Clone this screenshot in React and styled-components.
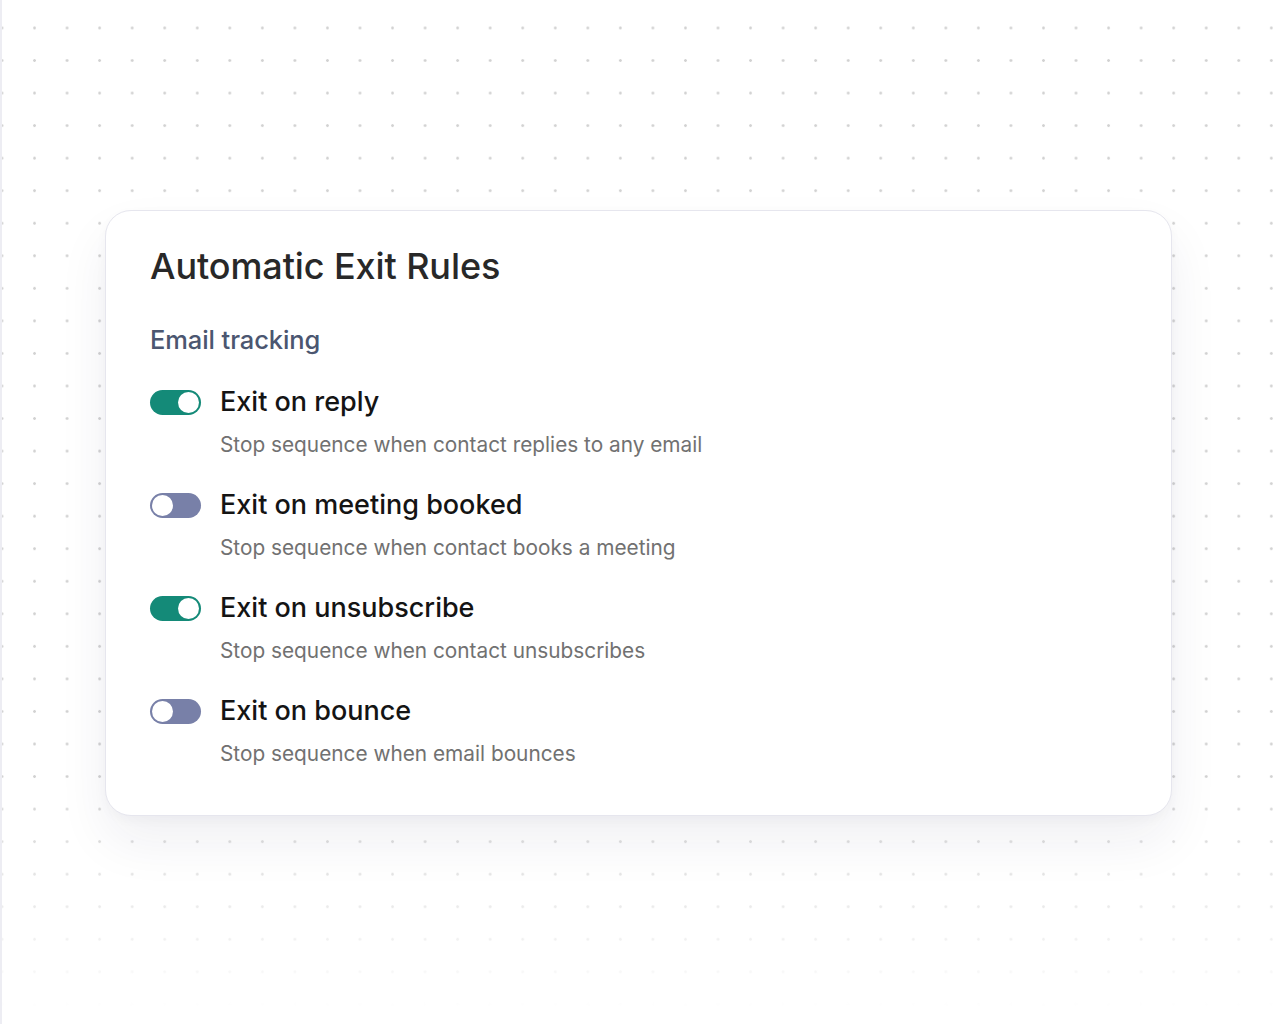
import React, { useState } from 'react';
import styled, { createGlobalStyle } from 'styled-components';

const GlobalStyle = createGlobalStyle`
  html, body {
    margin: 0;
    padding: 0;
    background: #ffffff;
  }
  body {
    font-family: Inter, 'Noto Sans', sans-serif;
    -webkit-font-smoothing: antialiased;
  }
`;

const rules = [
  { id: 'reply', title: 'Exit on reply', text: 'Stop sequence when contact replies to any email', on: true },
  { id: 'meeting', title: 'Exit on meeting booked', text: 'Stop sequence when contact books a meeting', on: false },
  { id: 'unsub', title: 'Exit on unsubscribe', text: 'Stop sequence when contact unsubscribes', on: true },
  { id: 'bounce', title: 'Exit on bounce', text: 'Stop sequence when email bounces', on: false },
];

const App = () => {
  const [state, setState] = useState(
    Object.fromEntries(rules.map((r) => [r.id, r.on]))
  );

  const flip = (id) => setState((s) => ({ ...s, [id]: !s[id] }));

  return (
    <Page>
      <GlobalStyle />
      <Dots />
      <Card>
        <Title>Automatic Exit Rules</Title>
        <Section>Email tracking</Section>
        <RuleList>
          {rules.map((r) => (
            <Rule key={r.id}>
              <RuleHead>
                <Switch
                  type="button"
                  role="switch"
                  aria-checked={state[r.id]}
                  $on={state[r.id]}
                  onClick={() => flip(r.id)}
                >
                  <Knob $on={state[r.id]} />
                </Switch>
                <RuleTitle>{r.title}</RuleTitle>
              </RuleHead>
              <RuleText>{r.text}</RuleText>
            </Rule>
          ))}
        </RuleList>
      </Card>
    </Page>
  );
};

const Page = styled.div`
  position: relative;
  width: 1280px;
  height: 1024px;
  box-sizing: border-box;
  padding: 210px 108px 0 103px;
  border-left: 2px solid #ededf3;
  overflow: hidden;
`;

// dotted canvas, fading out toward the bottom
const Dots = styled.div`
  position: absolute;
  inset: 0;
  background-image: radial-gradient(circle, #d2d2d2 1.1px, transparent 1.6px);
  background-size: 32.55px 32.55px;
  background-position: -16.3px 11.7px;
  -webkit-mask-image: linear-gradient(to bottom, #000 0, #000 780px, transparent 1010px);
  mask-image: linear-gradient(to bottom, #000 0, #000 780px, transparent 1010px);
  pointer-events: none;
`;

const Card = styled.section`
  position: relative;
  box-sizing: border-box;
  width: 1067px;
  height: 606px;
  padding: 32px 44px 0 44px;
  background: #ffffff;
  border: 1px solid #e6e6ee;
  border-radius: 26px;
  box-shadow: 0 26px 52px rgba(30, 30, 70, 0.065), 0 4px 12px rgba(30, 30, 70, 0.03);
`;

const Title = styled.h1`
  margin: 0;
  font-size: 36px;
  line-height: 46px;
  font-weight: 500;
  letter-spacing: -0.1px;
  color: #282828;
`;

const Section = styled.h2`
  margin: 35px 0 0;
  font-size: 25.5px;
  line-height: 32px;
  font-weight: 500;
  letter-spacing: -0.1px;
  color: #4b5670;
`;

const RuleList = styled.div`
  display: flex;
  flex-direction: column;
  gap: 28px;
  margin-top: 29px;
`;

const Rule = styled.div`
  display: flex;
  flex-direction: column;
  gap: 11px;
`;

const RuleHead = styled.div`
  display: flex;
  align-items: center;
  gap: 19px;
`;

const Switch = styled.button`
  flex: none;
  display: flex;
  align-items: center;
  width: 51px;
  height: 25px;
  padding: 0 2px;
  border: none;
  border-radius: 13px;
  background: ${(p) => (p.$on ? '#148a78' : '#7880a8')};
  cursor: pointer;
`;

const Knob = styled.span`
  width: 21px;
  height: 21px;
  border-radius: 50%;
  background: #ffffff;
  margin-left: ${(p) => (p.$on ? '26px' : '0')};
  transition: margin-left 0.15s ease;
`;

const RuleTitle = styled.span`
  font-size: 27px;
  line-height: 34px;
  font-weight: 500;
  color: #141414;
`;

const RuleText = styled.p`
  margin: 0 0 0 70px;
  font-size: 20.8px;
  line-height: 30px;
  font-weight: 400;
  color: #717171;
`;

export default App;
